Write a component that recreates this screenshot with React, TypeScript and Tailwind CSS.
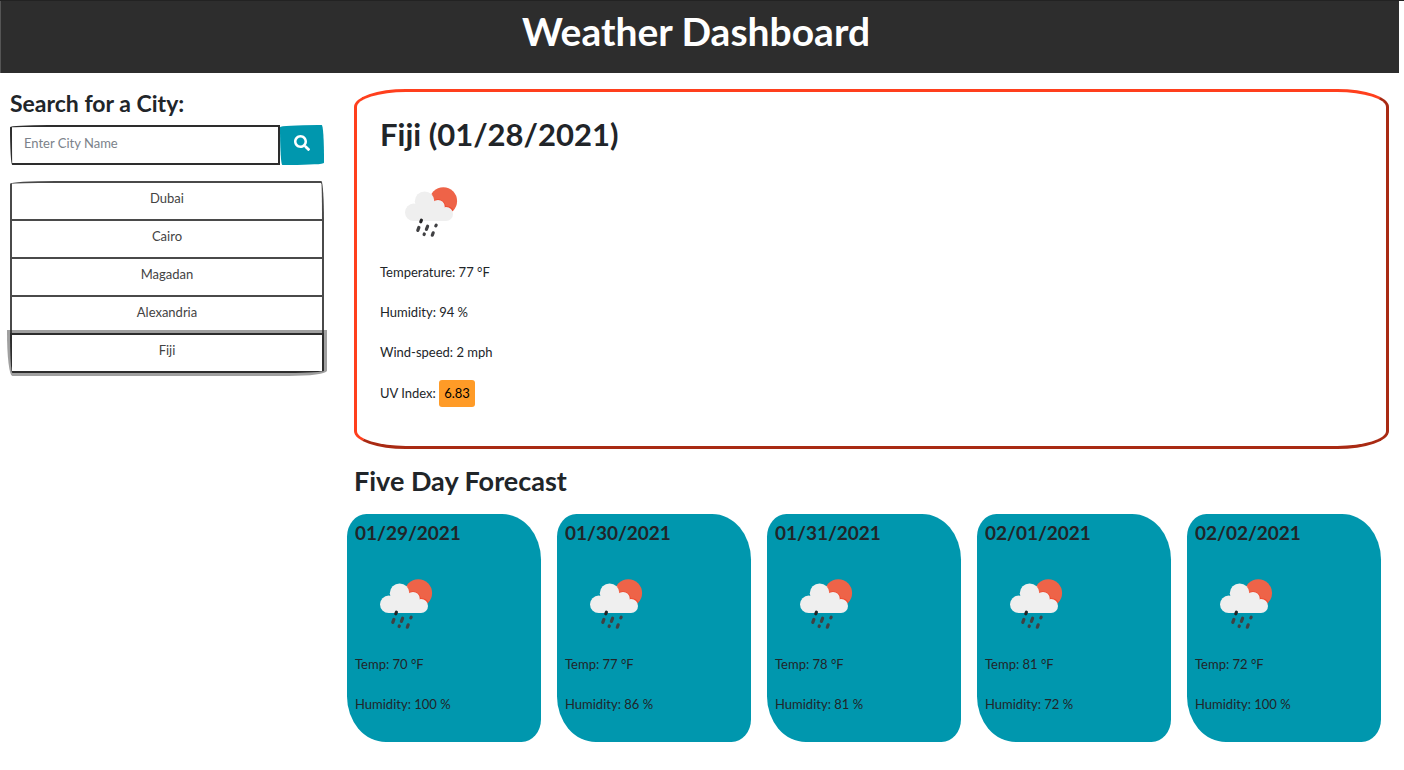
import { useState } from "react";
import type { FormEvent } from "react";
import { FaSearch } from "react-icons/fa";

type Day = { date: string; temp: number; humidity: number };

const cities = ["Dubai", "Cairo", "Magadan", "Alexandria", "Fiji"];

const forecast: Day[] = [
  { date: "01/29/2021", temp: 70, humidity: 100 },
  { date: "01/30/2021", temp: 77, humidity: 86 },
  { date: "01/31/2021", temp: 78, humidity: 81 },
  { date: "02/01/2021", temp: 81, humidity: 72 },
  { date: "02/02/2021", temp: 72, humidity: 100 },
];

function RainIcon() {
  return (
    <svg viewBox="0 0 100 100" className="block size-[100px]" role="img" aria-label="Rain with sun">
      <circle cx="63.3" cy="39" r="13.8" fill="#ee6348" />
      <path
        d="M50 34.5C52 36 53 37.7 53.4 39.6C58 35.8 64.8 39 65 45.2C69 44.6 71.4 46 72.8 48.6"
        fill="none"
        stroke="#f04a30"
        strokeWidth="1.4"
      />
      <g fill="#efefef">
        <circle cx="33.7" cy="50.3" r="8.7" />
        <circle cx="44.6" cy="39.2" r="9.8" />
        <circle cx="58" cy="44.6" r="6.7" />
        <circle cx="66" cy="52" r="7" />
        <path d="M33.7 59V45L40 40H56L66 50V59Z" />
      </g>
      <g stroke="#404043" strokeWidth="3.2" strokeLinecap="round">
        <path d="M41.4 58.2L40.8 59.8" stroke="#222224" />
        <path d="M38.9 65.4L37.8 68.4" />
        <path d="M47.6 64.2L46.4 67.4" />
        <path d="M44.3 72L44.1 72.6" />
        <path d="M56.2 63.1L55.8 63.9" />
        <path d="M53.2 70.8L52.3 73.2" />
      </g>
    </svg>
  );
}

export default function App() {
  const [query, setQuery] = useState("");
  const [city, setCity] = useState("Fiji");

  function search(e: FormEvent) {
    e.preventDefault();
    if (query.trim()) setCity(query.trim());
  }

  return (
    <div className="min-h-screen border-t border-[#222] bg-white pr-[5px] pb-7 font-['Lato',sans-serif] text-[13px] text-[#212529]">
      <header className="h-[72px] border-l border-[#555] bg-[#2d2d2d] pt-1.5 pr-2 text-center text-white">
        <h1 className="text-[39px] leading-[48px] font-bold">Weather Dashboard</h1>
      </header>

      <div className="grid grid-cols-[314px_minmax(0,1fr)] gap-[30px] px-2.5 pt-4">
        <aside>
          <form onSubmit={search}>
            <label htmlFor="city" className="block text-[23px] leading-7 font-bold">
              Search for a City:
            </label>
            <div className="mt-2 flex">
              <input
                id="city"
                value={query}
                onChange={(e) => setQuery(e.target.value)}
                placeholder="Enter City Name"
                className="h-10 min-w-0 flex-1 rounded-[255px_0_0_15px/15px_0_0_255px] border-2 border-[#2d2d2d] px-3 pb-1 outline-none placeholder:text-[#7b828a]"
              />
              <button
                type="submit"
                aria-label="Search"
                className="flex h-10 w-11 items-center justify-center rounded-[255px_15px_225px_15px/15px_225px_15px_255px] bg-[#0097ae] pb-1 text-white"
              >
                <FaSearch className="size-4" />
              </button>
            </div>
          </form>

          <div className="mt-4 flex flex-col">
            {cities.map((name) => (
              <button
                key={name}
                type="button"
                onClick={() => setCity(name)}
                className={
                  "-mb-0.5 h-10 border-2 bg-white pb-1 text-center text-[#434343] first:rounded-[255px_15px_0_0/15px_225px_0_0] last:rounded-[0_0_225px_15px/0_0_15px_255px] " +
                  (city === name ? "relative border-[#2d2d2d] shadow-[0_0_0_3px_rgba(45,45,45,0.45)]" : "border-[#4a4a4a]")
                }
              >
                {name}
              </button>
            ))}
          </div>
        </aside>

        <main>
          <section className="rounded-[5%] border-3 border-t-[#ff3f1d] border-r-[#a92a13] border-b-[#a92a13] border-l-[#ff3f1d] px-[23px] pt-[23px] pb-[39px]">
            <h2 className="text-[31px] leading-[38px] font-bold">{city} (01/28/2021)</h2>
            <div className="mt-[9px]">
              <RainIcon />
            </div>
            <div className="-mt-0.5 flex flex-col gap-4 leading-6">
              <p>Temperature: 77 °F</p>
              <p>Humidity: 94 %</p>
              <p>Wind-speed: 2 mph</p>
              <p>
                UV Index: <span className="inline-block rounded-[3px] bg-[#ff9b27] px-[5px] leading-[27px] text-black">6.83</span>
              </p>
            </div>
          </section>

          <h3 className="mt-4 text-[27px] leading-8 font-bold">Five Day Forecast</h3>
          <div className="mt-[17px] mr-2 -ml-[7px] grid grid-cols-5 gap-4">
            {forecast.map((day) => (
              <article key={day.date} className="rounded-[10%_20%] bg-[#0097ae] px-2 pt-[7px] pb-[26px]">
                <h4 className="text-[19px] leading-6 font-bold">{day.date}</h4>
                <div className="mt-[9px]">
                  <RainIcon />
                </div>
                <div className="-mt-0.5 flex flex-col gap-4 leading-6">
                  <p>Temp: {day.temp} °F</p>
                  <p>Humidity: {day.humidity} %</p>
                </div>
              </article>
            ))}
          </div>
        </main>
      </div>
    </div>
  );
}
